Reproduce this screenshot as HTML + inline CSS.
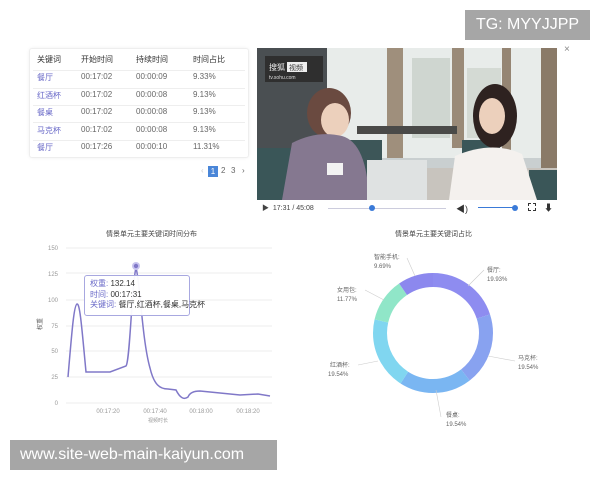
<!DOCTYPE html>
<html><head><meta charset="utf-8"><style>
*{margin:0;padding:0;box-sizing:border-box}
body{width:600px;height:480px;background:#fff;position:relative;overflow:hidden;font-family:"Liberation Sans","Noto Sans CJK SC",sans-serif;color:#555}
.a{position:absolute;white-space:nowrap}
.t{font-size:8px;color:#666}
.k{color:#6a6ac8}
</style></head><body>
<div class="a" style="left:465px;top:10px;width:125px;height:30px;background:#a6a6a6;color:#fff;font-size:16px;line-height:30px;text-align:center">TG: MYYJJPP</div>

<!-- table -->
<div class="a" style="left:29px;top:48px;width:220px;height:110px;border:1px solid #eee;border-radius:3px;box-shadow:0 0 3px #f0f0f0"></div>
<div class="a t" style="left:37px;top:54px;color:#333">关键词</div>
<div class="a t" style="left:81px;top:54px;color:#333">开始时间</div>
<div class="a t" style="left:136px;top:54px;color:#333">持续时间</div>
<div class="a t" style="left:193px;top:54px;color:#333">时间占比</div>
<div class="a" style="left:33px;top:70px;width:212px;border-top:1px solid #eee"></div>
<div class="a" style="left:33px;top:88px;width:212px;border-top:1px solid #eee"></div>
<div class="a" style="left:33px;top:105px;width:212px;border-top:1px solid #eee"></div>
<div class="a" style="left:33px;top:122px;width:212px;border-top:1px solid #eee"></div>
<div class="a" style="left:33px;top:140px;width:212px;border-top:1px solid #eee"></div>
<div class="a t k" style="left:37px;top:72px">餐厅</div><div class="a t" style="left:81px;top:72px">00:17:02</div><div class="a t" style="left:136px;top:72px">00:00:09</div><div class="a t" style="left:193px;top:72px">9.33%</div>
<div class="a t k" style="left:37px;top:90px">红酒杯</div><div class="a t" style="left:81px;top:90px">00:17:02</div><div class="a t" style="left:136px;top:90px">00:00:08</div><div class="a t" style="left:193px;top:90px">9.13%</div>
<div class="a t k" style="left:37px;top:107px">餐桌</div><div class="a t" style="left:81px;top:107px">00:17:02</div><div class="a t" style="left:136px;top:107px">00:00:08</div><div class="a t" style="left:193px;top:107px">9.13%</div>
<div class="a t k" style="left:37px;top:125px">马克杯</div><div class="a t" style="left:81px;top:125px">00:17:02</div><div class="a t" style="left:136px;top:125px">00:00:08</div><div class="a t" style="left:193px;top:125px">9.13%</div>
<div class="a t k" style="left:37px;top:142px">餐厅</div><div class="a t" style="left:81px;top:142px">00:17:26</div><div class="a t" style="left:136px;top:142px">00:00:10</div><div class="a t" style="left:193px;top:142px">11.31%</div>
<div class="a t" style="left:201px;top:166px;color:#ccc">‹</div>
<div class="a" style="left:208px;top:166px;width:10px;height:11px;background:#4a86d8;color:#fff;font-size:8px;text-align:center;line-height:11px">1</div>
<div class="a t" style="left:221px;top:166px">2</div>
<div class="a t" style="left:231px;top:166px">3</div>
<div class="a t" style="left:242px;top:166px">›</div>

<!-- video -->
<svg class="a" style="left:257px;top:48px" width="300" height="152" viewBox="0 0 300 152">
<rect width="300" height="152" fill="#c9cfd0"/>
<rect x="0" y="0" width="70" height="100" fill="#4a4f52"/>
<rect x="70" y="0" width="230" height="110" fill="#e8ecea"/>
<rect x="130" y="0" width="16" height="110" fill="#9f8f7c"/>
<rect x="195" y="0" width="12" height="100" fill="#9a8a78"/>
<rect x="245" y="0" width="9" height="110" fill="#958573"/>
<rect x="284" y="0" width="16" height="152" fill="#8a7a68"/>
<rect x="155" y="10" width="38" height="80" fill="#cfd6d0"/>
<rect x="210" y="20" width="34" height="70" fill="#d4dad4"/>
<rect x="60" y="120" width="240" height="32" fill="#c8c4be"/>
<rect x="100" y="78" width="100" height="8" fill="#4a4a48"/>
<rect x="0" y="100" width="40" height="52" fill="#3a5658"/>
<rect x="80" y="92" width="45" height="38" fill="#3d5658"/>
<rect x="205" y="92" width="38" height="46" fill="#3a5658"/>
<rect x="272" y="122" width="28" height="30" fill="#3a5658"/>
<rect x="8" y="8" width="58" height="26" fill="#2f2f2f"/>
<text x="12" y="22" font-size="8" fill="#eee">搜狐</text><rect x="30" y="14" width="20" height="10" fill="#eee"/><text x="32" y="22" font-size="7" fill="#333">视频</text>
<text x="12" y="31" font-size="5" fill="#ddd">tv.sohu.com</text>
<ellipse cx="72" cy="65" rx="22" ry="25" fill="#6a4a40"/>
<ellipse cx="78" cy="72" rx="14" ry="17" fill="#ecd0bc"/>
<path d="M25 152 L35 95 Q60 82 85 88 Q110 95 112 152 Z" fill="#857890"/>
<rect x="70" y="115" width="16" height="12" fill="#f2f2f2"/>
<ellipse cx="238" cy="68" rx="22" ry="32" fill="#2e2220"/>
<ellipse cx="235" cy="68" rx="13" ry="18" fill="#ecd0bc"/>
<path d="M192 152 L198 108 Q235 92 265 106 L280 152 Z" fill="#f4f1ee"/>
<rect x="110" y="112" width="60" height="40" fill="#dfe2e2"/>
</svg>
<div class="a" style="left:564px;top:44px;font-size:10px;color:#888">×</div>
<div class="a" style="left:262px;top:203px;font-size:7px;color:#444">▶ &nbsp;17:31 / 45:08</div>
<div class="a" style="left:328px;top:208px;width:118px;border-top:1px solid #ccd"></div>
<div class="a" style="left:369px;top:205px;width:6px;height:6px;border-radius:3px;background:#3a7ad8"></div>
<div class="a" style="left:456px;top:202px;font-size:9px;color:#333">◀)</div>
<div class="a" style="left:478px;top:207px;width:37px;border-top:1px solid #3a7ad8"></div>
<div class="a" style="left:512px;top:205px;width:6px;height:6px;border-radius:3px;background:#3a7ad8"></div>
<div class="a" style="left:528px;top:203px;width:8px;height:8px;border:1px dashed #333"></div>
<div class="a" style="left:544px;top:201px;font-size:9px;color:#333">⬇</div>

<!-- line chart -->
<div class="a" style="left:106px;top:229px;font-size:7px;color:#444">情景单元主要关键词时间分布</div>
<svg class="a" style="left:0;top:0" width="300" height="440">
<g stroke="#eee" stroke-width="1">
<line x1="66" y1="248" x2="272" y2="248"/><line x1="66" y1="273" x2="272" y2="273"/><line x1="66" y1="300" x2="272" y2="300"/><line x1="66" y1="326" x2="272" y2="326"/><line x1="66" y1="351" x2="272" y2="351"/><line x1="66" y1="377" x2="272" y2="377"/><line x1="66" y1="403" x2="272" y2="403"/>
</g>
<g font-size="6" fill="#999" text-anchor="end">
<text x="58" y="250">150</text><text x="58" y="276">125</text><text x="58" y="302">100</text><text x="58" y="328">75</text><text x="58" y="353">50</text><text x="58" y="379">25</text><text x="58" y="405">0</text>
</g>
<g font-size="6" fill="#999" text-anchor="middle">
<text x="108" y="413">00:17:20</text><text x="155" y="413">00:17:40</text><text x="201" y="413">00:18:00</text><text x="248" y="413">00:18:20</text>
<text x="158" y="422" font-size="5">视频时长</text>
</g>
<text x="42" y="330" font-size="6" fill="#666" transform="rotate(-90 42 330)">权重</text>
<path d="M68 377 C72 330 74 305 77 304 C80 303 82 330 86 372 L110 372 L126 366 C130 362 132 280 136 268 C140 280 142 340 150 368 C154 385 160 389 168 389 L176 390 C180 398 184 400 188 397 C190 392 196 391 200 391 L240 395 L258 394 L270 396" fill="none" stroke="#8078c8" stroke-width="1.5"/>
<circle cx="136" cy="266" r="4" fill="#c8c4ee"/><circle cx="136" cy="266" r="2.2" fill="#8078c8"/>
</svg>
<div class="a" style="left:84px;top:275px;width:106px;height:41px;background:rgba(255,255,255,.95);border:1px solid #a8a8e0;border-radius:3px;font-size:8px;line-height:10.5px;padding:3px 5px;color:#333">
<span class="k">权重:</span> 132.14<br><span class="k">时间:</span> 00:17:31<br><span class="k">关键词:</span> 餐厅,红酒杯,餐桌,马克杯</div>

<!-- donut -->
<div class="a" style="left:395px;top:229px;font-size:7px;color:#444">情景单元主要关键词占比</div>
<svg class="a" style="left:0;top:0" width="600" height="440">
<g transform="rotate(-90 433 333)" fill="none" stroke-width="14">
<circle cx="433" cy="333" r="53" stroke="#8e8cf0" stroke-dasharray="66.4 333" stroke-dashoffset="0"/>
<circle cx="433" cy="333" r="53" stroke="#88a2f0" stroke-dasharray="65.1 333" stroke-dashoffset="-66.4"/>
<circle cx="433" cy="333" r="53" stroke="#7ab6f2" stroke-dasharray="65.1 333" stroke-dashoffset="-131.5"/>
<circle cx="433" cy="333" r="53" stroke="#80d6f0" stroke-dasharray="65.1 333" stroke-dashoffset="-196.6"/>
<circle cx="433" cy="333" r="53" stroke="#90e6c8" stroke-dasharray="39.2 333" stroke-dashoffset="-261.7"/>
<circle cx="433" cy="333" r="53" stroke="#8c88ee" stroke-dasharray="32.3 333" stroke-dashoffset="-300.9"/>
</g>
<g stroke="#ccc" fill="none" stroke-width=".6">
<path d="M407 258 L415 276"/><path d="M484 270 L468 286"/><path d="M365 290 L384 300"/><path d="M515 361 L488 356"/><path d="M358 365 L378 361"/><path d="M441 417 L436 390"/>
</g>
<g font-size="6" fill="#666">
<text x="374" y="259">智能手机:</text><text x="374" y="268">9.69%</text>
<text x="487" y="272">餐厅:</text><text x="487" y="281">19.93%</text>
<text x="337" y="292">女用包:</text><text x="337" y="301">11.77%</text>
<text x="518" y="360">马克杯:</text><text x="518" y="369">19.54%</text>
<text x="330" y="367">红酒杯:</text><text x="328" y="376">19.54%</text>
<text x="446" y="417">餐桌:</text><text x="446" y="426">19.54%</text>
</g>
</svg>

<div class="a" style="left:10px;top:440px;width:267px;height:30px;background:#a6a6a6;color:#fff;font-size:16px;line-height:30px;padding-left:10px">www.site-web-main-kaiyun.com</div>
</body></html>
